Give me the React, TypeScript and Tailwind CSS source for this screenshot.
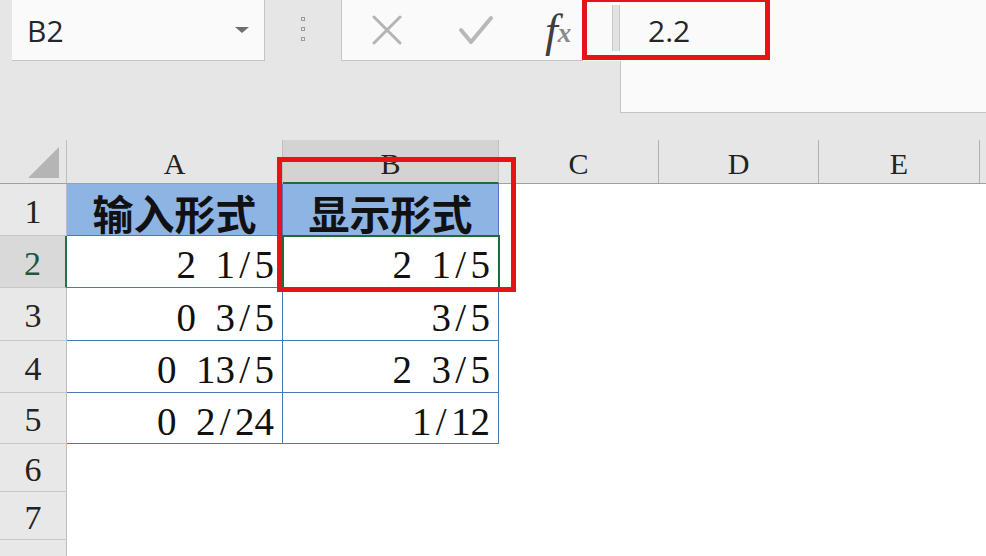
import React from "react";

const serif = "font-['Liberation_Serif','Times_New_Roman',serif]";

function Mono({ text }: { text: string }) {
  return (
    <span className="inline-flex">
      {text.split("").map((c, i) => (
        <span key={i} className="inline-block w-[0.5em] text-center">
          {c === " " ? "\u00a0" : c}
        </span>
      ))}
    </span>
  );
}

const rowHeights = ["h-[52px]", "h-[52px]", "h-[53px]", "h-[52px]", "h-[51px]", "h-[48px]", "h-[48px]", "h-[30px]"];
const aData = ["2 1/5", "0 3/5", "0 13/5", "0 2/24"];
const bData = ["2 1/5", "3/5", "2 3/5", "1/12"];

export default function App() {
  return (
    <div className="relative w-[986px] h-[556px] overflow-hidden bg-white font-['Open_Sans','Noto_Sans',sans-serif]">
      {/* Toolbar */}
      <div className="h-[140px] bg-[#e6e6e6] flex items-start pl-[12px]">
        {/* Name box */}
        <div className="w-[253px] h-[61px] bg-[#fafafa] border-r border-b border-[#c4c4c4] flex items-center justify-between pl-[15px] pr-[14px]">
          <span className="text-[30px] text-[#262626] leading-none mt-[1px]">B2</span>
          <svg width="16" height="8" viewBox="0 0 16 8">
            <path d="M1 1 L15 1 L8 7 Z" fill="#6e6e6e" />
          </svg>
        </div>
        {/* Dots */}
        <div className="w-[76px] h-[61px] flex justify-center pt-[17px]">
          <div className="flex flex-col gap-[6px] ml-[-1px]">
            <div className="w-[4px] h-[4px] border border-[#9a9a9a]" />
            <div className="w-[4px] h-[4px] border border-[#9a9a9a]" />
            <div className="w-[4px] h-[4px] border border-[#9a9a9a]" />
          </div>
        </div>
        {/* Buttons */}
        <div className="w-[242px] h-[61px] bg-[#fafafa] border-l border-b border-[#c4c4c4] flex items-center">
          <div className="w-[88px] flex justify-center ml-[1px]">
            <svg width="32" height="30" viewBox="0 0 32 30">
              <path d="M3 2 L29 28 M29 2 L3 28" stroke="#b4b4b4" strokeWidth="3" strokeLinecap="round" />
            </svg>
          </div>
          <div className="w-[90px] flex justify-center">
            <svg width="36" height="30" viewBox="0 0 36 30">
              <path d="M3 15 L13 27 L33 3" stroke="#b8b8b8" strokeWidth="4" fill="none" strokeLinecap="round" strokeLinejoin="round" />
            </svg>
          </div>
          <div className={`${serif} italic flex items-end leading-none ml-[24px] mt-[2px]`}>
            <span className="text-[46px] text-[#3e3e3e]">f</span>
            <span className="text-[27px] font-bold text-[#8a8a8a] mb-[7px]">x</span>
          </div>
        </div>
        {/* Formula */}
        <div className="flex-1 flex flex-col">
          <div className="h-[61px] flex bg-[#fafafa]">
            <div className="w-[29px]" />
            <div className="w-[8px] h-[46px] mt-[5px] bg-[#e2e2e2] border-l border-r border-[#c8c8c8]" />
            <div className="flex-1 flex items-center pl-[28px]">
              <span className="text-[30px] text-[#262626] leading-none mt-[1px]">2.2</span>
            </div>
          </div>
          <div className="ml-[37px] h-[52px] bg-[#fafafa] border-l border-b border-[#c4c4c4]" />
        </div>
      </div>

      {/* Sheet */}
      <div className="flex flex-col">
        {/* Column header row */}
        <div className={`flex h-[44px] bg-[#e6e6e6] border-b border-[#a0a0a0] ${serif} text-[30px] text-[#222]`}>
          <div className="w-[67px] border-r border-[#c0c0c0] flex items-start justify-end pr-[6px] pt-[7px]">
            <svg width="32" height="31" viewBox="0 0 32 31">
              <path d="M31 0 L31 31 L0 31 Z" fill="#b5b5b5" />
            </svg>
          </div>
          <div className="w-[216px] border-r border-[#c0c0c0] flex items-center justify-center pt-[4px]">A</div>
          <div className="w-[216px] bg-[#d3d3d3] border-r border-[#c0c0c0] border-b-2 border-b-[#1f6b3e] mb-[-1px] flex items-center justify-center pt-[4px]">B</div>
          <div className="w-[160px] border-r border-[#b0b0b0] flex items-center justify-center pt-[4px]">C</div>
          <div className="w-[160px] border-r border-[#b0b0b0] flex items-center justify-center pt-[4px]">D</div>
          <div className="w-[161px] border-r border-[#b0b0b0] flex items-center justify-center pt-[4px]">E</div>
          <div className="flex-1" />
        </div>

        {rowHeights.map((h, r) => {
          const rowNum = r + 1;
          const selected = rowNum === 2;
          const inTable = rowNum <= 5;
          return (
            <div key={r} className={`flex ${h}`}>
              <div
                className={`w-[67px] shrink-0 flex items-center justify-center ${serif} text-[34px] pt-[3px] border-b border-[#c6c6c6] ${
                  selected
                    ? "bg-[#d9d9d9] text-[#24553a] border-r-2 border-r-[#217346]"
                    : "bg-[#e8e8e8] text-[#222] border-r border-r-[#bdbdbd]"
                }`}
              >
                {rowNum <= 7 ? rowNum : ""}
              </div>
              {inTable ? (
                rowNum === 1 ? (
                  <>
                    <div className="w-[216px] shrink-0 bg-[#8db4e3] border-r border-b border-[#4a78b8] flex items-center justify-center pt-[6px] font-['Noto_Sans_CJK_SC',sans-serif] font-bold text-[41px] text-[#111] leading-none">
                      输入形式
                    </div>
                    <div className="w-[216px] shrink-0 bg-[#8db4e3] border-r border-b border-[#4a78b8] flex items-center justify-center pt-[6px] font-['Noto_Sans_CJK_SC',sans-serif] font-bold text-[41px] text-[#111] leading-none">
                      显示形式
                    </div>
                  </>
                ) : (
                  <>
                    <div className={`w-[216px] shrink-0 border-r border-b border-[#4a78b8] flex items-center justify-end pr-[8px] pt-[6px] ${serif} text-[39px] text-[#111] leading-none`}>
                      <Mono text={aData[rowNum - 2]} />
                    </div>
                    <div
                      className={`relative w-[216px] shrink-0 border-r border-b border-[#4a78b8] flex items-center justify-end pr-[8px] pt-[6px] ${serif} text-[39px] text-[#111] leading-none ${
                        selected ? "outline-2 outline-[#1f6b3e] -outline-offset-1 z-10" : ""
                      }`}
                    >
                      <Mono text={bData[rowNum - 2]} />
                    </div>
                  </>
                )
              ) : null}
              <div className="flex-1" />
            </div>
          );
        })}
      </div>

      {/* Red highlight boxes */}
      <div className="absolute left-[582px] top-[-3px] w-[188px] h-[63px] border-[5px] border-[#e8121b] z-20" />
      <div className="absolute left-[277px] top-[157px] w-[239px] h-[135px] border-[5px] border-[#e8121b] z-20" />
    </div>
  );
}
